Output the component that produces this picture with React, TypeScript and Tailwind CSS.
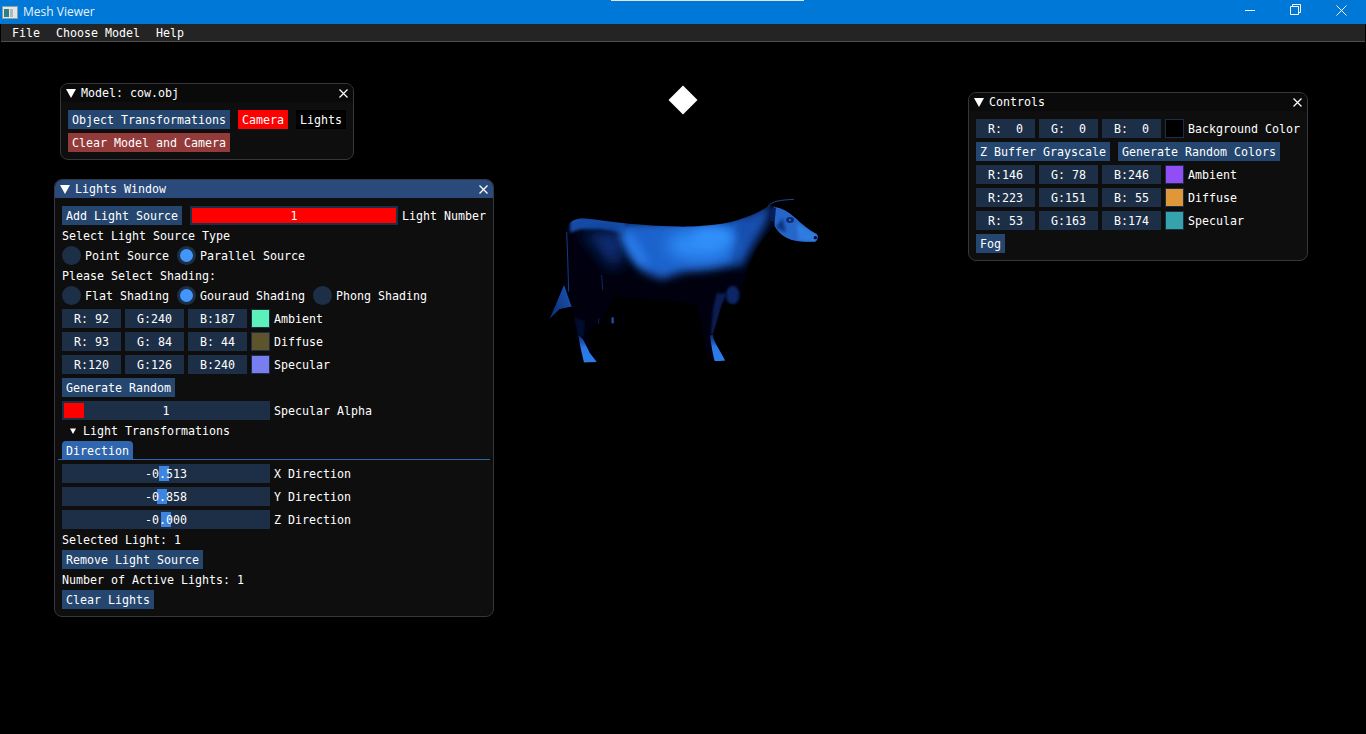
import React from "react";

const Btn = ({ label, className = "bg-[#25466f]" }: { label: string; className?: string }) => (
  <div className={`h-[19px] px-1 leading-[21px] whitespace-pre shrink-0 ${className}`}>{label}</div>
);

const Line = ({ children }: { children: React.ReactNode }) => (
  <div className="h-[13px] leading-[15px] whitespace-pre">{children}</div>
);

const Field = ({ text }: { text: string }) => (
  <div className="w-[59px] h-[19px] leading-[21px] text-center whitespace-pre bg-[#1d2f47]">{text}</div>
);

const ColorRow = ({ values, color, label }: { values: string[]; color: string; label: string }) => (
  <div className="flex gap-1 h-[19px]">
    {values.map((v) => (
      <Field key={v} text={v} />
    ))}
    <div className="w-[19px] h-[19px] border border-[#1d2f47]" style={{ backgroundColor: color }} />
    <div className="leading-[21px]">{label}</div>
  </div>
);

const Radio = ({ label, checked }: { label: string; checked?: boolean }) => (
  <div className="flex items-center gap-1 h-[19px]">
    <div className="w-[19px] h-[19px] rounded-full bg-[#1d2f47] flex items-center justify-center">
      {checked && <div className="w-[13px] h-[13px] rounded-full bg-[#4296fa]" />}
    </div>
    <div className="h-[19px] leading-[21px] whitespace-pre">{label}</div>
  </div>
);

const Slider = ({ value, grab, label }: { value: string; grab: number; label: string }) => (
  <div className="flex gap-1 h-[19px]">
    <div className="relative w-[208px] h-[19px] bg-[#1d2f47]">
      <div className="absolute top-[2px] w-[10px] h-[15px] bg-[#3d85e0]" style={{ left: grab }} />
      <div className="relative text-center leading-[21px]">{value}</div>
    </div>
    <div className="leading-[21px]">{label}</div>
  </div>
);

const TitleBar = ({ title, active }: { title: string; active?: boolean }) => (
  <div className={`flex items-center h-[18px] pl-[5px] pr-[5px] ${active ? "bg-[#294a7a]" : "bg-[#0a0a0a]"}`}>
    <svg width="10" height="9" viewBox="0 0 10 9" className="mr-[5px]">
      <path d="M0 0H10L5 9Z" fill="#fff" />
    </svg>
    <div className="flex-1 leading-[18px]">{title}</div>
    <svg width="9" height="9" viewBox="0 0 9 9">
      <path d="M0.5 0.5L8.5 8.5M8.5 0.5L0.5 8.5" stroke="#fff" strokeWidth="1.2" fill="none" />
    </svg>
  </div>
);

const Cow = () => (
  <svg width="290" height="180" viewBox="0 0 870 540" className="absolute left-[540px] top-[190px]">
    <defs>
      <clipPath id="cowClip">
        <path d="M78 125C80 100 100 85 130 85C170 88 210 96 250 100C320 106 380 110 430 110C470 110 510 106 540 102C570 98 590 92 610 85C640 75 665 62 682 50C692 44 700 46 708 50C735 58 755 72 775 92C795 110 815 125 830 132C836 140 834 150 825 155C805 155 785 156 770 153C750 150 730 140 712 122L704 108C685 130 665 150 650 175C640 195 632 215 622 240C612 280 605 310 598 340C590 348 570 345 550 335C540 360 535 385 530 400C522 420 518 430 520 445C530 470 545 490 556 512L520 514L505 512C500 485 495 465 490 440C485 410 478 375 470 345C400 335 350 330 300 325L220 320C205 350 195 375 180 400C160 412 145 420 140 435C150 465 160 490 172 516L130 518C122 490 115 465 110 440C105 415 102 390 100 365L92 350L60 358L28 388C40 360 55 330 62 300C72 270 78 240 80 200Z" />
      </clipPath>
      <linearGradient id="legFill" x1="0" y1="0" x2="0" y2="1">
        <stop offset="0" stopColor="#0a2a70" />
        <stop offset="0.45" stopColor="#2a78e4" />
        <stop offset="1" stopColor="#2c7ee8" />
      </linearGradient>
      <linearGradient id="tuftFill" x1="1" y1="0" x2="0" y2="1">
        <stop offset="0" stopColor="#1a56b8" />
        <stop offset="1" stopColor="#0a2a70" />
      </linearGradient>
      <filter id="b24" x="-40%" y="-40%" width="180%" height="180%"><feGaussianBlur stdDeviation="24" /></filter>
      <filter id="b14" x="-40%" y="-40%" width="180%" height="180%"><feGaussianBlur stdDeviation="14" /></filter>
      <filter id="b5" x="-30%" y="-30%" width="160%" height="160%"><feGaussianBlur stdDeviation="5" /></filter>
      <filter id="b2" x="-30%" y="-30%" width="160%" height="160%"><feGaussianBlur stdDeviation="2" /></filter>
    </defs>
    <g clipPath="url(#cowClip)">
      <rect width="870" height="540" fill="#00000e" />
      {/* back and flank */}
      <path d="M235 100L560 90L625 80L605 160L585 225L500 240L430 245L365 268L310 245L255 180Z" fill="#1d62cc" filter="url(#b14)" />
      <path d="M590 90L695 40L680 100L640 165L600 235L575 210Z" fill="#1850b0" filter="url(#b14)" />
      <path d="M90 80L260 85L250 128L180 118L120 118L90 128Z" fill="#174ea8" filter="url(#b5)" />
      <path d="M120 125L240 125L250 210L215 235L170 170Z" fill="#0c3080" filter="url(#b24)" />
      <ellipse cx="480" cy="165" rx="100" ry="45" fill="#2f8cf8" filter="url(#b24)" />
      <ellipse cx="520" cy="140" rx="60" ry="25" fill="#3090fa" filter="url(#b14)" />
      <path d="M235 125L275 130L330 225L295 225Z" fill="#2a7eee" filter="url(#b14)" />
      {/* head */}
      <path d="M702 50L745 60L790 100L835 135L830 158L770 156L730 142L704 112Z" fill="#2766c8" filter="url(#b2)" />
      <path d="M770 100L835 135L830 158L775 150Z" fill="#2f7ce0" filter="url(#b5)" />
      <path d="M706 112L728 85L738 128Z" fill="#103482" filter="url(#b5)" />
      <ellipse cx="750" cy="90" rx="12" ry="9" fill="#0c2c72" filter="url(#b2)" />
      <ellipse cx="750" cy="90" rx="3" ry="3" fill="#3474d8" />
      {/* chest and front leg */}
      <ellipse cx="578" cy="315" rx="20" ry="28" fill="#0c2868" filter="url(#b5)" />
      <path d="M530 310L560 310L545 345L530 400L524 440L512 430L520 350Z" fill="#081e52" filter="url(#b5)" />
      <path d="M510 436L522 436L556 512L524 514Q515 480 510 436Z" fill="url(#legFill)" filter="url(#b2)" />
      {/* rear leg */}
      <path d="M104 380L135 395L132 440L115 440Z" fill="#04102e" filter="url(#b5)" />
      <path d="M115 436L128 446L150 490L172 518L132 518Q122 480 115 436Z" fill="url(#legFill)" filter="url(#b2)" />
      {/* tail tuft */}
      <path d="M72 285L95 350L58 358L26 390Q50 340 72 285Z" fill="url(#tuftFill)" filter="url(#b2)" />
    </g>
    <path d="M80 125Q84 220 86 305" stroke="#1d5bb8" strokeWidth="2" fill="none" />
    <path d="M185 255L188 300" stroke="#123f88" strokeWidth="2" fill="none" />
    <path d="M218 382L218 400" stroke="#1a52a8" strokeWidth="7" fill="none" />
    <path d="M177 385L175 402" stroke="#0e3474" strokeWidth="2" fill="none" />
    <path d="M684 50C695 32 725 30 762 28" stroke="#2a6cd0" strokeWidth="2" fill="none" />
    <path d="M690 58L708 52L704 95L692 92Z" fill="#081f5c" />
    <ellipse cx="826" cy="143" rx="5" ry="5" fill="#000a30" />
  </svg>
);

export default function App() {
  return (
    <div className="relative w-[1366px] h-[734px] overflow-hidden bg-black text-white text-[11.63px] [font-family:'DejaVu_Sans_Mono',monospace]">
      {/* Title bar */}
      <div className="flex items-center h-[24px] bg-[#0078d7]">
        <svg width="16" height="13" viewBox="0 0 16 13" className="ml-[2px]">
          <rect x="0.5" y="0.5" width="15" height="12" fill="#dfe6e6" stroke="#8d9fa8" />
          <rect x="2" y="3" width="5" height="8" fill="#2f7f86" />
          <rect x="8" y="3" width="3" height="8" fill="#aeb9bc" />
        </svg>
        <div className="ml-[5px] text-[12px] text-[#e8f3fc] [font-family:'Open_Sans',sans-serif]">Mesh Viewer</div>
        <div className="flex-1" />
        <svg width="102" height="24" viewBox="0 0 102 24" className="mr-[19px]">
          <path d="M0 10.5H10" stroke="#fff" fill="none" />
          <path d="M45.5 6.5H53.5V14.5H45.5ZM47.5 6.5V4.5H55.5V12.5H53.5" stroke="#fff" fill="none" />
          <path d="M91.5 5.5L101.5 15.5M101.5 5.5L91.5 15.5" stroke="#fff" fill="none" />
        </svg>
      </div>
      <div className="absolute top-0 left-[611px] w-[193px] h-px bg-[#e4e4e4]" />

      {/* Menu bar */}
      <div className="flex gap-4 h-[18px] mx-px pl-[11px] leading-[19px] bg-[#242424] border-b border-[#4d4d4d]">
        <div>File</div>
        <div>Choose Model</div>
        <div>Help</div>
      </div>

      <Cow />

      {/* Light marker */}
      <svg width="30" height="30" viewBox="0 0 30 30" className="absolute left-[668px] top-[85px]">
        <path d="M15 0.5L29.5 15L15 29.5L0.5 15Z" fill="#fff" />
      </svg>

      {/* Model window */}
      <div className="absolute left-[60px] top-[83px] w-[294px] h-[77px] rounded-[8px] overflow-hidden border border-[#36363d] bg-[#0e0e0e]">
        <TitleBar title="Model: cow.obj" />
        <div className="flex flex-col gap-1 pt-[8px] pl-[7px]">
          <div className="flex gap-2">
            <Btn label="Object Transformations" />
            <Btn label="Camera" className="bg-[#ff0000]" />
            <Btn label="Lights" className="bg-black" />
          </div>
          <Btn label="Clear Model and Camera" className="self-start bg-[#933a3a]" />
        </div>
      </div>

      {/* Lights window */}
      <div className="absolute left-[54px] top-[179px] w-[440px] rounded-[8px] overflow-hidden border border-[#36363d] bg-[#0e0e0e]">
        <TitleBar title="Lights Window" active />
        <div className="flex flex-col gap-1 pt-[8px] pb-[7px] pl-[7px] pr-[3px]">
          <div className="flex h-[19px]">
            <Btn label="Add Light Source" />
            <div className="ml-2 w-[208px] h-[19px] p-[2px] bg-[#1d2f47]">
              <div className="h-[15px] leading-[17px] text-center bg-[#ff0000]">1</div>
            </div>
            <div className="ml-1 leading-[21px]">Light Number</div>
          </div>
          <Line>Select Light Source Type</Line>
          <div className="flex gap-2">
            <Radio label="Point Source" />
            <Radio label="Parallel Source" checked />
          </div>
          <Line>Please Select Shading:</Line>
          <div className="flex gap-2">
            <Radio label="Flat Shading" />
            <Radio label="Gouraud Shading" checked />
            <Radio label="Phong Shading" />
          </div>
          <ColorRow values={["R: 92", "G:240", "B:187"]} color="#5cf0bb" label="Ambient" />
          <ColorRow values={["R: 93", "G: 84", "B: 44"]} color="#5d542c" label="Diffuse" />
          <ColorRow values={["R:120", "G:126", "B:240"]} color="#787ef0" label="Specular" />
          <Btn label="Generate Random" className="self-start bg-[#25466f]" />
          <div className="flex gap-1 h-[19px]">
            <div className="relative w-[208px] h-[19px] bg-[#1d2f47]">
              <div className="absolute left-[2px] top-[2px] w-[20px] h-[15px] bg-[#ff0000]" />
              <div className="relative text-center leading-[21px]">1</div>
            </div>
            <div className="leading-[21px]">Specular Alpha</div>
          </div>
          <div className="flex items-center h-[13px] pl-[8px]">
            <svg width="6" height="6" viewBox="0 0 6 6" className="mr-[7px]">
              <path d="M0 0.5H6L3 6Z" fill="#fff" />
            </svg>
            <div className="h-[13px] leading-[15px]">Light Transformations</div>
          </div>
          <div className="-ml-[4px] border-b border-[#2f66ad] pl-[4px]">
            <div className="w-[71px] h-[18px] px-1 leading-[20px] rounded-t-[4px] bg-[#2f66ad]">Direction</div>
          </div>
          <Slider value="-0.513" grab={97} label="X Direction" />
          <Slider value="-0.858" grab={95} label="Y Direction" />
          <Slider value="-0.000" grab={99} label="Z Direction" />
          <Line>Selected Light: 1</Line>
          <Btn label="Remove Light Source" className="self-start bg-[#25466f]" />
          <Line>Number of Active Lights: 1</Line>
          <Btn label="Clear Lights" className="self-start bg-[#25466f]" />
        </div>
      </div>

      {/* Controls window */}
      <div className="absolute left-[968px] top-[92px] w-[340px] h-[169px] rounded-[8px] overflow-hidden border border-[#36363d] bg-[#0e0e0e]">
        <TitleBar title="Controls" />
        <div className="flex flex-col gap-1 pt-[8px] pl-[7px]">
          <ColorRow values={["R:  0", "G:  0", "B:  0"]} color="#000000" label="Background Color" />
          <div className="flex gap-2">
            <Btn label="Z Buffer Grayscale" />
            <Btn label="Generate Random Colors" />
          </div>
          <ColorRow values={["R:146", "G: 78", "B:246"]} color="#924ef6" label="Ambient" />
          <ColorRow values={["R:223", "G:151", "B: 55"]} color="#df9737" label="Diffuse" />
          <ColorRow values={["R: 53", "G:163", "B:174"]} color="#35a3ae" label="Specular" />
          <Btn label="Fog" className="self-start bg-[#25466f]" />
        </div>
      </div>
    </div>
  );
}
